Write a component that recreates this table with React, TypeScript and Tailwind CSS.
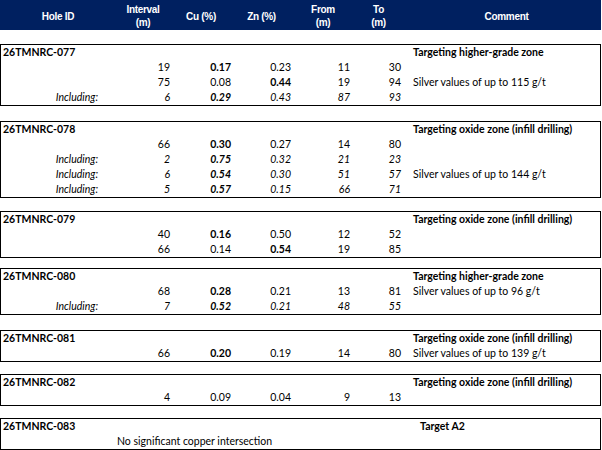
import React from "react";

type Cell = { v: string; b?: boolean };
type Row = {
  inc?: boolean;
  interval: string;
  cu: Cell;
  zn: Cell;
  from: string;
  to: string;
  comment?: string;
};
type Group = {
  id: string;
  title: string;
  titleOffset?: boolean;
  rows: Row[];
  note?: string;
  mt: string;
};

const groups: Group[] = [
  {
    id: "26TMNRC-077",
    mt: "mt-[14px]",
    title: "Targeting higher-grade zone",
    rows: [
      { interval: "19", cu: { v: "0.17", b: true }, zn: { v: "0.23" }, from: "11", to: "30" },
      { interval: "75", cu: { v: "0.08" }, zn: { v: "0.44", b: true }, from: "19", to: "94", comment: "Silver values of up to 115 g/t" },
      { inc: true, interval: "6", cu: { v: "0.29", b: true }, zn: { v: "0.43" }, from: "87", to: "93" },
    ],
  },
  {
    id: "26TMNRC-078",
    mt: "mt-[15px]",
    title: "Targeting oxide zone (infill drilling)",
    rows: [
      { interval: "66", cu: { v: "0.30", b: true }, zn: { v: "0.27" }, from: "14", to: "80" },
      { inc: true, interval: "2", cu: { v: "0.75", b: true }, zn: { v: "0.32" }, from: "21", to: "23" },
      { inc: true, interval: "6", cu: { v: "0.54", b: true }, zn: { v: "0.30" }, from: "51", to: "57", comment: "Silver values of up to 144 g/t" },
      { inc: true, interval: "5", cu: { v: "0.57", b: true }, zn: { v: "0.15" }, from: "66", to: "71" },
    ],
  },
  {
    id: "26TMNRC-079",
    mt: "mt-[13px]",
    title: "Targeting oxide zone (infill drilling)",
    rows: [
      { interval: "40", cu: { v: "0.16", b: true }, zn: { v: "0.50" }, from: "12", to: "52" },
      { interval: "66", cu: { v: "0.14" }, zn: { v: "0.54", b: true }, from: "19", to: "85" },
    ],
  },
  {
    id: "26TMNRC-080",
    mt: "mt-[10px]",
    title: "Targeting higher-grade zone",
    rows: [
      { interval: "68", cu: { v: "0.28", b: true }, zn: { v: "0.21" }, from: "13", to: "81", comment: "Silver values of up to 96 g/t" },
      { inc: true, interval: "7", cu: { v: "0.52", b: true }, zn: { v: "0.21" }, from: "48", to: "55" },
    ],
  },
  {
    id: "26TMNRC-081",
    mt: "mt-[15px]",
    title: "Targeting oxide zone (infill drilling)",
    rows: [
      { interval: "66", cu: { v: "0.20", b: true }, zn: { v: "0.19" }, from: "14", to: "80", comment: "Silver values of up to 139 g/t" },
    ],
  },
  {
    id: "26TMNRC-082",
    mt: "mt-[12px]",
    title: "Targeting oxide zone (infill drilling)",
    rows: [{ interval: "4", cu: { v: "0.09" }, zn: { v: "0.04" }, from: "9", to: "13" }],
  },
  {
    id: "26TMNRC-083",
    mt: "mt-[12px]",
    title: "Target A2",
    titleOffset: true,
    rows: [],
    note: "No significant copper intersection",
  },
];

const gridCols = "grid grid-cols-[116px_54px_62px_59px_60px_51px_1fr]";

function DataRow({ r }: { r: Row }) {
  const it = r.inc ? "italic" : "";
  return (
    <div className={`${gridCols} h-[15px] leading-[15px] ${it}`}>
      <div className="text-right pr-[19px]">{r.inc ? "Including:" : ""}</div>
      <div className="text-right pr-[1px]">{r.interval}</div>
      <div className={`text-right pr-[2px] ${r.cu.b ? "font-bold" : ""}`}>{r.cu.v}</div>
      <div className={`text-right pr-[1px] ${r.zn.b ? "font-bold" : ""}`}>{r.zn.v}</div>
      <div className="text-right pr-[2px]">{r.from}</div>
      <div className="text-right pr-[2px]">{r.to}</div>
      <div className="pl-[10px] not-italic whitespace-nowrap">{r.comment ?? ""}</div>
    </div>
  );
}

function GroupBox({ g }: { g: Group }) {
  return (
    <div className={`border border-black w-[601px] ${g.mt}`}>
      <div className={`${gridCols} h-[15px] leading-[15px] font-bold`}>
        <div className="pl-[2px] whitespace-nowrap">{g.id}</div>
        <div />
        <div />
        <div />
        <div />
        <div />
        <div className={`${g.titleOffset ? "pl-[17px]" : "pl-[10px]"} whitespace-nowrap`}>{g.title}</div>
      </div>
      {g.rows.map((r, i) => (
        <DataRow key={i} r={r} />
      ))}
      {g.note && (
        <div className={`${gridCols} h-[15px] leading-[15px]`}>
          <div />
          <div className="col-span-5 whitespace-nowrap">{g.note}</div>
        </div>
      )}
    </div>
  );
}

export default function App() {
  return (
    <div
      className="w-[602px] h-[450px] bg-white text-black overflow-hidden text-[10.5px]"
      style={{ fontFamily: "Lato, 'Open Sans', sans-serif" }}
    >
      <div
        className={`${gridCols} w-[601px] h-[30px] bg-[#002060] text-white font-bold text-[10px] leading-[13px] items-center pt-[2px] tracking-[-0.3px]`}
        style={{ fontFamily: "'Liberation Sans', Arial, sans-serif" }}
      >
        <div className="text-center">Hole ID</div>
        <div className="text-center">
          Interval
          <br />
          (m)
        </div>
        <div className="text-center">Cu (%)</div>
        <div className="text-center">Zn (%)</div>
        <div className="text-center pl-[4px]">
          From
          <br />
          (m)
        </div>
        <div className="text-center pl-[4px]">
          To
          <br />
          (m)
        </div>
        <div className="text-center pl-[10px]">Comment</div>
      </div>
      <div className="flex flex-col">
        {groups.map((g) => (
          <GroupBox key={g.id} g={g} />
        ))}
      </div>
    </div>
  );
}
